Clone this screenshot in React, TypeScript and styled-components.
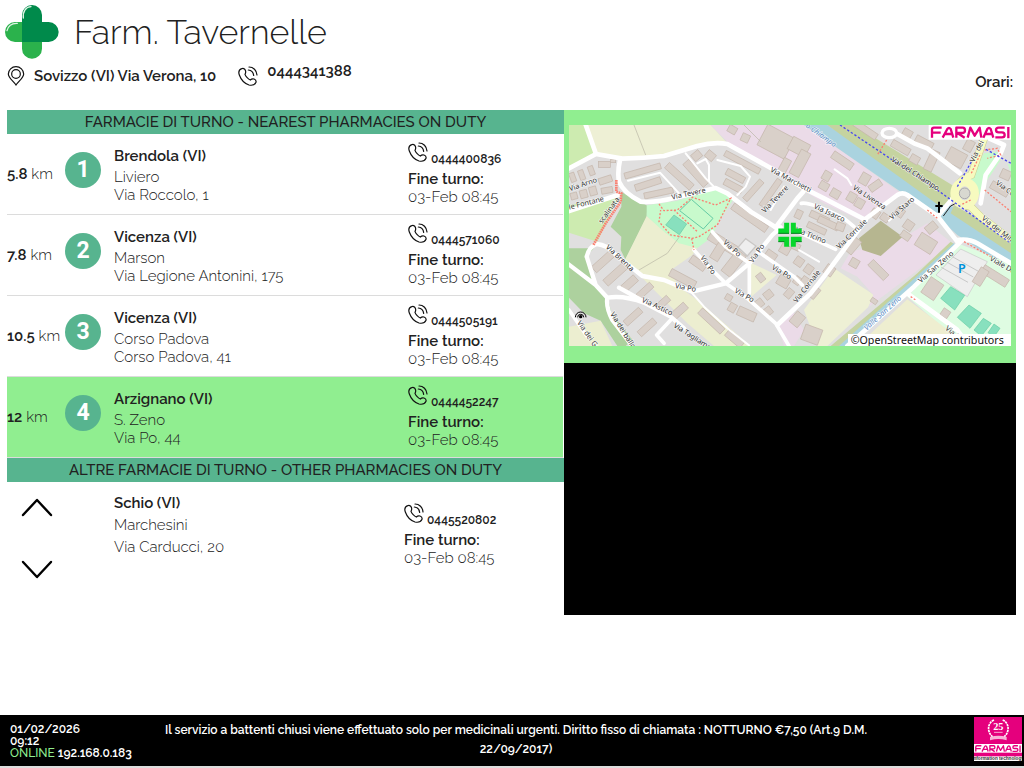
import React from "react";
import styled, { createGlobalStyle } from "styled-components";

const Global = createGlobalStyle`
  * { box-sizing: border-box; }
  body {
    margin: 0;
    background: #fff;
    color: #212121;
    font-family: Raleway, Lato, "Open Sans", sans-serif;
    font-size: 15px;
  }
  h1, h2, p, ul { margin: 0; padding: 0; font-weight: inherit; }
  a { color: inherit; text-decoration: none; }
`;

const Page = styled.div`
  min-height: 100vh;
  display: flex;
  flex-direction: column;
`;

const Header = styled.header`
  height: 110px;
  padding: 5px 11px 0 5px;
`;

const Brand = styled.div`
  display: flex;
  align-items: center;
  gap: 15px;
  height: 54px;
`;

const Title = styled.h1`
  font-size: 34px;
  font-weight: 300;
  line-height: 56px;
`;

const Contacts = styled.div`
  display: flex;
  align-items: flex-start;
  padding: 5px 0 0 2px;
  font-weight: 600;
  line-height: 24px;
`;

const Contact = styled.div`
  display: flex;
  align-items: center;
  gap: 9px;
  height: 24px;
  margin-right: 22px;
`;

const HeaderPhone = styled.a`
  align-self: flex-start;
  line-height: 14px;
`;

const Hours = styled.div`
  margin-left: auto;
  padding-top: 6px;
`;

const Main = styled.main`
  display: grid;
  grid-template-columns: 557fr 452fr;
  align-items: start;
  padding: 0 8px 0 7px;
`;

const Bar = styled.h2`
  height: 24px;
  background: #57b48f;
  text-align: center;
  font-size: 15px;
  line-height: 24px;
  font-weight: 500;
`;

const List = styled.ul`
  list-style: none;
`;

const Row = styled.li<{ $active?: boolean }>`
  display: grid;
  grid-template-columns: 58px 49px 1fr 155px;
  height: 81px;
  margin-right: 1px;
  border-bottom: 1px solid #dcdcdc;
  background: ${(p) => (p.$active ? "#90ee90" : "transparent")};
`;

const Distance = styled.span`
  align-self: center;
  white-space: nowrap;
  font-weight: 300;
  b { font-weight: 600; }
`;

const Badge = styled.span`
  width: 36px;
  height: 36px;
  margin-top: 18px;
  border-radius: 50%;
  background: #57b48f;
  color: #fff;
  font: 700 23px/36px Roboto, sans-serif;
  text-align: center;
`;

const Place = styled.div<{ $line: number; $cityLine: number }>`
  padding-top: 10px;
  font-weight: 300;
  line-height: ${(p) => p.$line}px;
  p:first-child {
    font-weight: 600;
    line-height: ${(p) => p.$cityLine}px;
  }
`;

const Shift = styled.div`
  padding-top: 8px;
  font-weight: 300;
  line-height: 18px;
`;

const Phone = styled.a`
  display: flex;
  align-items: flex-end;
  gap: 3px;
  height: 26px;
  font-size: 12px;
  font-weight: 600;
  line-height: 18px;
  svg { align-self: flex-start; }
`;

const Label = styled.p`
  padding-top: 2px;
  font-weight: 600;
`;

const Others = styled.div`
  display: grid;
  grid-template-columns: 107px 1fr 160px;
`;

const Arrows = styled.div`
  display: flex;
  flex-direction: column;
  gap: 37px;
  padding: 14px 0 0 12px;
`;

const ArrowButton = styled.button`
  width: 36px;
  height: 24px;
  padding: 0;
  border: 0;
  background: none;
  color: #000;
`;

const OtherShift = styled.div`
  padding-top: 13px;
`;

const MapPanel = styled.div`
  padding: 15px 5px 17px;
  background: #90ee90;
  svg { display: block; width: 100%; height: auto; }
`;

const VideoPanel = styled.div`
  height: 252px;
  background: #000;
`;

const Footer = styled.footer`
  display: grid;
  grid-template-columns: 140px 1fr 140px;
  height: 53px;
  margin-top: auto;
  padding: 0 2px 0 10px;
  border-bottom: 2px solid #ddd;
  background: #000;
  color: #fff;
  font-size: 12px;
  font-weight: 600;
`;

const Status = styled.div`
  padding-top: 8px;
  line-height: 12px;
  white-space: nowrap;
`;

const Online = styled.span`
  color: #90ee90;
  font-weight: 500;
`;

const Notice = styled.p`
  padding-top: 6px;
  line-height: 19px;
  text-align: center;
`;

const FarmasiLogo = styled.div`
  justify-self: end;
  padding-top: 2px;
`;

const PhoneIcon = () => (
  <svg width="20" height="20" viewBox="-1 -1 60 60" fill="none" stroke="#111" strokeWidth="3.6" strokeLinecap="round" aria-hidden="true">
    <path d="M10 7C3 10 0 18 3 26 8 40 20 52 32 56 42 58 50 55 53 48 54 44 52 40 47 38 42 36 39 38 36 41 30 39 22 30 20 24 22 21 23 17 21 12 19 7 14 5 10 7Z" />
    <path d="M32 2C45 2 55 12 56 26M30 11C39 12 45 18 46 27" />
  </svg>
);

const PinIcon = () => (
  <svg width="18" height="20" viewBox="0 0 54 60" fill="none" stroke="#111" strokeWidth="3.6" aria-hidden="true">
    <path d="M27 57C20 46 4 36 4 24a23 22 0 0 1 46 0C50 36 34 46 27 57Z" />
    <circle cx="27" cy="24" r="13" />
  </svg>
);

const CrossLogo = () => (
  <svg width="54" height="54" viewBox="15 15 162 162" aria-hidden="true">
    <path d="M66 66H45a30 30 0 0 0 0 60h21v20a30 30 0 0 0 60 0V120L80 60Z" fill="#2bb24c" />
    <path d="M66 126V45a30 30 0 0 1 60 0V66h20a30 30 0 0 1 0 60Z" fill="#008a4b" />
    <path d="M70 54C68 34 78 21 93 20" fill="none" stroke="#dff3e4" strokeWidth="4" strokeLinecap="round" />
    <path d="M21 92C25 77 36 69 52 70" fill="none" stroke="#dff3e4" strokeWidth="4" strokeLinecap="round" />
  </svg>
);

const Chevron = ({ down }: { down?: boolean }) => (
  <svg width="36" height="24" viewBox="0 0 36 24" fill="none" stroke="currentColor" strokeWidth="2.4" strokeLinecap="round" strokeLinejoin="round">
    <path d={down ? "M4 5l14 15L32 5" : "M4 19L18 4l14 15"} />
  </svg>
);

/* Wide techno lettering of the brand, drawn as a stroked mark */
const Wordmark = ({ color }: { color: string }) => (
  <g fill="none" stroke={color} strokeWidth="7" strokeLinejoin="round">
    <path d="M4 34V10Q4 4 10 4H33M4 19H30M36 34L50 8Q55 1 60 8L68 34M44 23H65M77 34V4H96Q103 4 103 12 103 20 96 20H80L102 34M111 34L119 4 132 28 147 4 152 34M158 34L170 8Q175 1 180 8L188 34M166 23H185M222 4H204Q196 4 196 11 196 18 204 18H214Q222 18 222 26 222 33 214 33H194M233 2V36" />
  </g>
);

const FarmasiBadge = () => (
  <svg width="48" height="44" viewBox="0 0 144 132" role="img" aria-label="Farmasi information technology">
    <rect width="144" height="132" fill="#e5007d" />
    <g fill="none" stroke="#fff" strokeWidth="5" strokeDasharray="7 2">
      <path d="M60 9C40 18 38 44 56 60M86 9C106 18 108 44 90 60" />
    </g>
    <path d="M48 60Q73 52 98 60V70Q73 62 48 70Z" fill="#f7b4d7" />
    <text x="73" y="38" fill="#fff" fontFamily="Liberation Serif, serif" fontSize="31" textAnchor="middle">25</text>
    <path d="M60 46H86" stroke="#fff" strokeWidth="2" />
    <rect y="81" width="144" height="26" fill="#fff" />
    <g transform="translate(3 84) scale(.58)"><Wordmark color="#e5007d" /></g>
    <rect y="118" width="144" height="14" fill="#fff" />
    <text x="72" y="129" fill="#333" fontFamily="Liberation Sans, sans-serif" fontSize="14" textAnchor="middle">information technology</text>
  </svg>
);

type Street = [number, number, number, string];
const streets: Street[] = [
  [18, 244, -19, "Via Arno"], [16, 299, -14, "le Fontane"], [114, 342, -54, "scalinata"],
  [324, 269, -12, "Via Tevere"], [602, 310, -46, "Via Tevere"], [617, 184, 28, "Via Marchetti"],
  [748, 294, 25, "Via Isarco"], [865, 236, 34, "Via Livenza"], [984, 330, -41, "Via Staro"],
  [826, 418, -44, "Via Cornale"], [692, 364, 22, "Via Ticino"], [980, 152, 33, "Val del Chiampo"],
  [1230, 158, -64, "Via dei"], [1294, 222, 36, "Via Cornale"], [1252, 328, 38, "Via dei Mille"],
  [124, 413, 43, "Via Brenta"], [332, 534, 10, "Via Po"], [408, 443, 55, "Via Po"],
  [476, 399, 42, "Via Po"], [566, 460, -55, "Via Po"], [622, 476, 31, "Via Po"],
  [510, 546, 30, "Via Po"], [232, 575, 25, "Via Astico"], [327, 650, 33, "Via Tagliamento"],
  [138, 612, 58, "Via dei ballo"], [38, 638, 55, "Via dei Go"], [698, 580, -52, "Via Cornale"],
  [1070, 520, -41, "Via San Zeno"], [1276, 450, 30, "Viale Dei"], [1142, 658, 38, "Via S"],
];

/* x, y, width, height, rotation */
const buildings: [number, number, number, number, number][] = [
  [103, 154, 36, 18, 0], [140, 148, 15, 10, 0], [18, 188, 16, 28, -20], [45, 180, 16, 30, -20], [74, 168, 16, 28, -20],
  [104, 200, 40, 20, -18], [112, 232, 34, 18, -10], [20, 248, 20, 20, -15], [48, 240, 22, 24, -15], [76, 230, 22, 26, -15],
  [180, 174, 112, 18, -16], [212, 212, 80, 20, -18], [240, 240, 88, 18, -12], [296, 188, 100, 22, 42], [350, 178, 92, 24, 48],
  [384, 125, 28, 24, -40], [425, 125, 28, 24, 40], [476, 148, 118, 18, 28], [484, 188, 60, 20, 28], [478, 218, 60, 20, 28],
  [530, 232, 76, 18, -48], [572, 240, 96, 18, -55], [495, 312, 124, 22, 35], [492, 48, 26, 22, 30], [532, 72, 24, 24, 25],
  [590, 60, 92, 70, 28], [676, 90, 58, 42, 28], [650, 145, 24, 44, 28], [692, 120, 32, 80, 28], [800, 140, 70, 24, 34],
  [776, 184, 24, 28, 30], [766, 216, 28, 24, 30], [800, 238, 28, 26, 30], [850, 248, 26, 28, 30], [874, 266, 26, 28, 30],
  [888, 190, 28, 34, 30], [914, 216, 40, 22, -35], [736, 312, 60, 20, 25], [760, 330, 66, 20, 25], [728, 346, 60, 18, 25],
  [694, 300, 20, 26, 25], [816, 338, 26, 24, 20], [684, 400, 24, 20, 25],
  [866, 50, 78, 20, 34], [980, 102, 60, 22, 30], [1015, 58, 28, 28, 30], [1052, 86, 56, 24, 28], [1090, 120, 26, 64, 25],
  [1038, 136, 28, 24, 30], [1148, 120, 56, 46, 28], [1202, 90, 26, 34, 28], [1278, 225, 58, 24, 30], [1310, 180, 30, 28, 25],
  [920, 298, 26, 26, 35], [950, 312, 26, 22, 35], [994, 294, 26, 26, 35], [1020, 332, 28, 28, 35], [1010, 366, 30, 22, 35],
  [80, 442, 76, 24, -42], [114, 480, 82, 24, -42], [172, 508, 50, 24, -42], [216, 532, 54, 20, -42], [270, 570, 50, 20, -42],
  [176, 610, 62, 20, -42], [218, 642, 62, 20, -42], [322, 590, 50, 24, -42], [314, 494, 84, 24, 28], [376, 448, 52, 24, 35],
  [430, 384, 92, 30, 32], [492, 420, 34, 80, 38], [448, 400, 28, 52, 32], [396, 622, 92, 22, 43], [482, 674, 60, 24, 40], [484, 554, 20, 18, 30],
  [494, 580, 22, 26, 30], [520, 598, 56, 28, 24], [604, 424, 34, 24, 35], [580, 490, 20, 26, -38], [600, 542, 26, 24, -38],
  [574, 568, 24, 24, -38], [600, 592, 24, 24, -38], [640, 500, 36, 30, 30], [664, 536, 22, 28, 40], [648, 404, 30, 28, 30],
  [692, 442, 26, 26, 35], [722, 465, 24, 26, 35], [690, 500, 20, 24, 35], [782, 466, 28, 30, 35], [712, 500, 20, 24, 35],
  [842, 378, 40, 50, 40], [1085, 340, 34, 26, -40], [1058, 378, 56, 44, 32], [858, 446, 26, 26, 30], [910, 468, 66, 24, 45],
  [1082, 508, 46, 56, 34], [1132, 598, 24, 24, 34], [740, 530, 22, 36, 40],
  [1250, 485, 86, 26, 32], [1236, 474, 28, 52, 32], [684, 608, 32, 40, 40], [716, 650, 54, 48, 20], [920, 566, 20, 14, 35],
];

const StreetMap = () => (
  <svg viewBox="15 45 1326 663" role="img" aria-label="Mappa">
    <rect x="15" y="45" width="1326" height="663" fill="#e0dfdf" />
    <path d="M15 45H68L96 132 15 176Z M15 285L165 258 100 395 15 368Z" fill="#cdebb0" />
    <path d="M68 45H440L490 100 400 110 300 140 175 146 96 132Z" fill="#eef0d5" />
    <path d="M440 45H725L1010 250 900 335 780 280 500 105Z" fill="#ebdbe8" />
    <path d="M172 246L250 287 248 322 184 448 170 420 172 380 140 350 172 290ZM15 415H90L66 440 96 525 132 565 142 610 206 690 185 708H160L110 632 60 610 15 563Z" fill="#add19e" />
    <path d="M248 318L315 375 410 400 385 435 318 482 345 530 400 570 560 708H450L370 640 250 520 184 448ZM15 650L110 632 145 708H15Z" fill="#eceed0" />
    <path d="M560 458L638 495 562 560ZM810 475L930 555 912 592 790 708H760L720 600Z" fill="#eef0d5" />
    <path d="M248 286L340 272 455 236 510 265 458 345 445 380 400 414 345 400 300 365 248 318Z" fill="#c8facc" />
    <path d="M860 425L1015 385 1090 340 1165 400 1055 485 915 590 928 555 880 500 830 475ZM638 640L684 600 720 660 690 708H660Z" fill="#ebdbe8" />
    <path d="M885 385L950 332 1016 380 950 438 895 420Z" fill="#b6b690" />
    <path d="M720 45H790L1158 285 1341 420V480L1180 375 1120 320 1010 245Z" fill="#aad3df" />
    <path d="M790 45H870L1180 235 1155 275 1130 290ZM1170 285L1341 385V430L1160 310Z" fill="#c5d3a0" />
    <path d="M1160 395L1182 410 850 708H800L1060 490Z" fill="#c5d3a0" />
    <path d="M1174 404L830 712" stroke="#aad3df" strokeWidth="13" />
    <path d="M1180 400L1341 460V708H1200L1030 560Z" fill="#dffce2" />
    <path d="M1190 417L1270 455 1210 560 1116 495Z" fill="#eee" stroke="#c8c8c8" strokeWidth="2" />
    <path d="M1165 440l80 45M1148 456l80 45M1132 472l80 45" stroke="#c8c8c8" strokeWidth="3" />
    <path d="M1030 568L1165 670 1150 708H880Z" fill="#eeeed0" />
    <path d="M1260 130L1300 125 1310 150 1270 210 1245 255 1215 200Z M1330 160L1341 165V190Z" fill="#c8facc" />
    <g fill="#88e0be" stroke="#65cba4" strokeWidth="2">
      <path d="M330 315L368 342 346 374 305 345ZM1160 530L1202 556 1172 600 1130 565ZM1215 585L1252 610 1218 655 1180 622ZM1258 625L1282 640 1252 678 1230 660ZM1290 642L1308 655 1290 680 1272 668Z" />
      <path d="M382 268L447 325 418 357 347 302Z" fill="none" strokeWidth="3" />
    </g>

    <g fill="#d9d0c9" stroke="#c4b6ab" strokeWidth="2">
      {buildings.map(([x, y, w, h, r], i) => (
        <rect key={i} x={x} y={y} width={w} height={h} transform={`rotate(${r} ${x + w / 2} ${y + h / 2})`} />
      ))}
    </g>
    <path d="M522 412L545 386 576 408 550 438Z" fill="#eee" stroke="#c9c7c5" strokeWidth="4" />

    <g fill="none" stroke="#fff" strokeLinejoin="round" strokeLinecap="round">
      <path strokeWidth="14" d="M60 30L96 132 175 146Q240 145 300 138L400 108Q450 95 490 102L640 185 720 235 780 265 905 330M96 132L10 178M168 150Q160 185 165 215 180 250 230 275 270 280 340 262L455 234 490 250 560 305 635 352" />
      <path strokeWidth="14" d="M635 352L700 265 718 245M900 330L1000 255Q1015 245 1030 255L1120 318 1180 395M1120 320L1170 260M905 330L870 378 780 500 740 550 640 645M10 305L162 255" />
      <path strokeWidth="14" d="M1190 395L1050 530 850 708M1030 550L1180 660 1215 708M1180 390Q1215 385 1240 400L1341 460M1000 72L1050 100 1090 115 1188 190M1220 60L1320 105 1310 130 1265 195 1250 280" />
      <path strokeWidth="13" d="M68 440Q75 410 98 402 130 405 150 430L235 498 300 510 385 545 485 520 556 460 625 375 650 352M68 440L95 525 130 563M10 460L95 525 130 563Q180 555 240 578L320 620 360 655M130 563Q125 590 145 630L205 708M165 533L240 575" />
      <path strokeWidth="11" d="M445 365L485 410 550 455M390 420L430 465 485 520 550 565 635 640 675 708M590 430L690 500 715 525M712 280Q740 275 840 325L870 350M700 365L815 418M556 460V550M320 630L278 675 300 700M15 600L70 680" />
      <path strokeWidth="6" d="M192 212L288 188 345 250M365 130L425 205 455 235M400 160L425 147 435 165V215M460 150L530 168 558 200 545 230 520 255M385 550L420 590 490 655 555 706M812 178L850 205 862 225M975 332L1000 310M705 420L765 455M660 230L620 300" />
      <ellipse cx="976" cy="69" rx="22" ry="14" strokeWidth="10" />
    </g>
    <path d="M1262 80L1222 195Q1180 210 1175 250 1185 285 1220 290L1250 320 1341 390" fill="none" stroke="#cbd08f" strokeWidth="23" />
    <path d="M1262 80L1222 195Q1180 210 1175 250 1185 285 1220 290L1250 320 1341 390" fill="none" stroke="#f7fabf" strokeWidth="20" />
    <ellipse cx="1202" cy="250" rx="30" ry="34" fill="#ddd" stroke="#f7fabf" strokeWidth="26" />
    <circle cx="1202" cy="250" r="16" fill="#d8d8d0" stroke="#aaa" strokeWidth="3" />

    <g fill="none" stroke="#fa8072" strokeWidth="4" strokeDasharray="6 5">
      <path d="M285 282L300 302 340 300 385 262 455 285 500 265 460 345 405 380 385 385 320 375 285 335 290 300M330 300L400 365M383 385L390 420M968 90L940 135M1220 270L1190 285M1222 190L1250 130M1262 120L1300 115 1310 135 1270 145M1262 240L1341 305M1090 300L1120 325M1200 395L1280 440M1040 560L1055 570" />
      <path d="M157 210V245L172 250 170 275 125 340 88 405" strokeWidth="8" strokeDasharray="5 2" />
    </g>
    <path d="M828 45L1120 240 1341 400M1180 230L1225 150M1266 118L1341 160" fill="none" stroke="#4848ee" strokeWidth="4" strokeDasharray="7 6" />
    <path d="M210 45L245 135M540 45L590 95M225 480L310 430 350 375" fill="none" stroke="#b8b5a5" strokeWidth="2" />

    <g fill="#333" stroke="#fff" strokeWidth="4" strokeOpacity=".7" paintOrder="stroke" fontFamily="Noto Sans, sans-serif" fontSize="22">
      {streets.map(([x, y, r, name], i) => (
        <text key={i} x={x} y={y} transform={`rotate(${r} ${x} ${y})`}>{name}</text>
      ))}
      <g fill="#5a8bc4" fontStyle="italic">
        <text x="724" y="50" transform="rotate(36 724 50)">o Chiampo</text>
        <text x="908" y="662" transform="rotate(-42 908 662)">Valle San Zeno</text>
      </g>
    </g>
    <text x="1182" y="490" fill="#0092da" fontFamily="Noto Sans, sans-serif" fontWeight="600" fontSize="38">P</text>
    <path d="M1125 275V308M1114 288H1136" stroke="#000" strokeWidth="6" />
    <path d="M1138 318L1160 288 1172 282" fill="none" stroke="#222" strokeWidth="3" />
    <path d="M34 622A16 16 0 0 1 66 622M41 622a9 9 0 0 1 18 0" fill="none" stroke="#000" strokeWidth="3" />
    <circle cx="50" cy="620" r="5" />

    <g fill="none" stroke="#08d62b" strokeWidth="15">
      <path d="M643 363H668V338M688 338V363H713M713 388H688V410M668 410V388H643" />
    </g>
    <path d="M643 370H675M681 370H713M643 395H661M695 395H713" stroke="#05801f" strokeWidth="3" />

    <rect x="1094" y="45" width="247" height="44" fill="#fff" />
    <g transform="translate(1100 49)"><Wordmark color="#e5007d" /></g>
    <rect x="852" y="672" width="489" height="36" fill="#fff" />
    <text x="860" y="701" fill="#111" fontFamily="Noto Sans, sans-serif" fontSize="32">©OpenStreetMap contributors</text>
  </svg>
);

const pharmacies = [
  { km: "5.8", city: "Brendola (VI)", name: "Liviero", street: "Via Roccolo, 1", phone: "0444400836" },
  { km: "7.8", city: "Vicenza (VI)", name: "Marson", street: "Via Legione Antonini, 175", phone: "0444571060" },
  { km: "10.5", city: "Vicenza (VI)", name: "Corso Padova", street: "Corso Padova, 41", phone: "0444505191" },
  { km: "12", city: "Arzignano (VI)", name: "S. Zeno", street: "Via Po, 44", phone: "0444452247" },
];

const ShiftInfo = ({ phone }: { phone: string }) => (
  <Shift>
    <Phone href={`tel:${phone}`}><PhoneIcon />{phone}</Phone>
    <Label>Fine turno:</Label>
    <p>03-Feb 08:45</p>
  </Shift>
);

export default function App() {
  return (
    <Page>
      <Global />
      <Header>
        <Brand>
          <CrossLogo />
          <Title>Farm. Tavernelle</Title>
        </Brand>
        <Contacts>
          <Contact><PinIcon />Sovizzo (VI) Via Verona, 10</Contact>
          <Contact><PhoneIcon /><HeaderPhone href="tel:0444341388">0444341388</HeaderPhone></Contact>
          <Hours>Orari:</Hours>
        </Contacts>
      </Header>
      <Main>
        <section>
          <Bar>FARMACIE DI TURNO - NEAREST PHARMACIES ON DUTY</Bar>
          <List>
            {pharmacies.map((p, i) => (
              <Row key={p.phone} $active={i === 3}>
                <Distance><b>{p.km}</b> km</Distance>
                <Badge>{i + 1}</Badge>
                <Place $line={18} $cityLine={24}>
                  <p>{p.city}</p>
                  <p>{p.name}</p>
                  <p>{p.street}</p>
                </Place>
                <ShiftInfo phone={p.phone} />
              </Row>
            ))}
          </List>
          <Bar>ALTRE FARMACIE DI TURNO - OTHER PHARMACIES ON DUTY</Bar>
          <Others>
            <Arrows>
              <ArrowButton aria-label="Precedente"><Chevron /></ArrowButton>
              <ArrowButton aria-label="Successiva"><Chevron down /></ArrowButton>
            </Arrows>
            <Place $line={22} $cityLine={22}>
              <p>Schio (VI)</p>
              <p>Marchesini</p>
              <p>Via Carducci, 20</p>
            </Place>
            <OtherShift><ShiftInfo phone="0445520802" /></OtherShift>
          </Others>
        </section>
        <aside>
          <MapPanel><StreetMap /></MapPanel>
          <VideoPanel />
        </aside>
      </Main>
      <Footer>
        <Status>
          <p>01/02/2026</p>
          <p>09:12</p>
          <p><Online>ONLINE</Online> 192.168.0.183</p>
        </Status>
        <Notice>
          Il servizio a battenti chiusi viene effettuato solo per medicinali urgenti. Diritto fisso di chiamata : NOTTURNO €7,50 (Art.9 D.M. 22/09/2017)
        </Notice>
        <FarmasiLogo><FarmasiBadge /></FarmasiLogo>
      </Footer>
    </Page>
  );
}
